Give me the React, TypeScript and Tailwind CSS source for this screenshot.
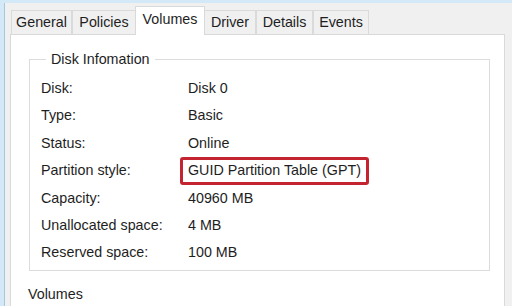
const tabs: [string, number][] = [
  ['General', 61],
  ['Policies', 64],
  ['Volumes', 70],
  ['Driver', 52],
  ['Details', 57],
  ['Events', 56],
];

const rows: [string, string][] = [
  ['Disk:', 'Disk 0'],
  ['Type:', 'Basic'],
  ['Status:', 'Online'],
  ['Partition style:', 'GUID Partition Table (GPT)'],
  ['Capacity:', '40960 MB'],
  ['Unallocated space:', '4 MB'],
  ['Reserved space:', '100 MB'],
];

export default function App() {
  return (
    <div
      className="w-[512px] h-[306px] overflow-hidden bg-[#d4e9f7] pl-[4px] pt-[3px] text-[14.3px] text-[#1e1e1e]"
      style={{ fontFamily: '"Liberation Sans", Arial, sans-serif' }}
    >
      <div className="h-full bg-[#f0f0f0] border-l border-[#a9c7dc] pl-[5px] flex flex-col">
        {/* tab strip */}
        <div className="flex items-end h-[31px] pl-[1px]">
          {tabs.map(([t, w]) => {
            const active = t === 'Volumes';
            return active ? (
              <div
                key={t}
                style={{ width: w }}
                className="h-[29px] pt-[2px] text-center bg-white border border-b-0 border-[#d9d9d9] -mx-[1px] relative z-10 -mb-[1px]"
              >
                {t}
              </div>
            ) : (
              <div
                key={t}
                style={{ width: w }}
                className="h-[24px] pt-[3px] text-center bg-[#f0f0f0] border border-b-0 border-[#dadada] leading-[17px]"
              >
                {t}
              </div>
            );
          })}
        </div>
        {/* tab panel */}
        <div className="w-[495px] flex-1 bg-white border border-[#d9d9d9] border-b-0 pl-[18px] pt-[15px]">
          <fieldset className="w-[461px] h-[221px] border border-[#dcdcdc] pl-[11px] pt-[7px]">
            <legend className="ml-[5px] px-[5px] leading-[18px]">Disk Infomation</legend>
            <div className="flex flex-col">
              {rows.map(([k, v]) => (
                <div key={k} className="flex items-center h-[27.4px]">
                  <div className="w-[147px]">{k}</div>
                  {k === 'Partition style:' ? (
                    <div className="-ml-[8px] px-[5px] h-[28px] flex items-center border-[3px] border-[#c42330] rounded-[3px]">
                      {v}
                    </div>
                  ) : (
                    <div>{v}</div>
                  )}
                </div>
              ))}
            </div>
          </fieldset>
          <div className="mt-[13px] -ml-[1px]">Volumes</div>
        </div>
      </div>
    </div>
  );
}
